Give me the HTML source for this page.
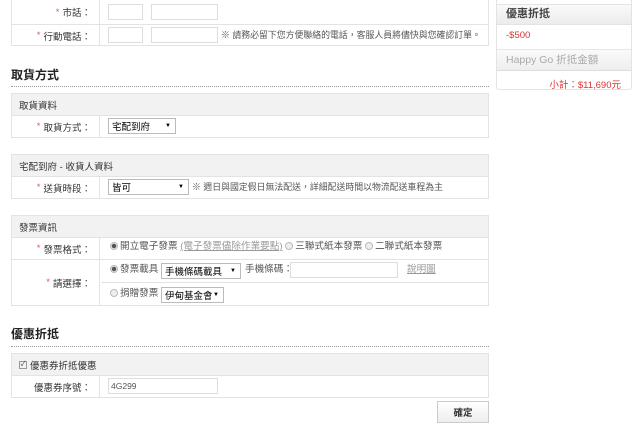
<!DOCTYPE html>
<html><head><meta charset="utf-8"><style>
*{margin:0;padding:0;box-sizing:border-box}
body{width:640px;height:428px;background:#fff;position:relative;overflow:hidden;font-family:"Liberation Sans","Noto Sans CJK TC",sans-serif;font-size:10px;color:#333}
.a{position:absolute}
.box{position:absolute;left:11px;width:478px;border:1px solid #e3e3e3;background:#fff}
.hd{position:absolute;left:0;right:0;background:#f2f2f2;border-bottom:1px solid #e3e3e3;padding-left:7px;display:flex;align-items:center;font-size:9.5px;color:#333}
.row{position:absolute;left:0;right:0;border-top:1px solid #e3e3e3}
.lab{position:absolute;left:0;width:88px;border-right:1px solid #e3e3e3;top:0;bottom:0;display:flex;align-items:center;justify-content:flex-end;padding-right:8px;font-size:9.5px}
.lab b{color:#e55;font-weight:normal;margin-right:3px}
.in{position:absolute;border:1px solid #ddd;background:#fff;height:16px}
.sel{position:absolute;border:1px solid #bbb;background:#fff;height:16px;display:flex;align-items:center;padding-left:3px;font-size:9.5px;color:#000}
.sel:after{content:"▼";position:absolute;right:4px;top:4px;font-size:6px;line-height:6px}
.h2{position:absolute;left:11px;font-size:12px;font-weight:bold;color:#222}
.dot{position:absolute;left:11px;width:478px;border-top:1px dotted #999}
.rad{display:inline-block;width:8px;height:8px;border-radius:50%;border:1px solid #bbb;background:#eee;vertical-align:-1px;margin-right:2px}
.rad.on{background:radial-gradient(#555 0 2px,#eee 2.5px)}
.t{position:absolute;white-space:nowrap;font-size:8.9px;color:#555;line-height:12px}
.r{font-size:9.6px}
</style></head><body>

<div class="box" style="top:-1px;height:47px">
 <div class="row" style="top:0;height:24px;border-top:none"><div class="lab"><b>*</b>市話：</div></div>
 <div class="row" style="top:24px;height:22px"><div class="lab"><b>*</b>行動電話：</div></div>
</div>
<div class="in" style="left:108px;top:4px;width:35px"></div>
<div class="in" style="left:151px;top:4px;width:67px"></div>
<div class="in" style="left:108px;top:27px;width:35px"></div>
<div class="in" style="left:151px;top:27px;width:67px"></div>
<div class="t" style="left:221px;top:29px">※ 請務必留下您方便聯絡的電話，客服人員將儘快與您確認訂單。</div>

<div class="h2" style="top:66px">取貨方式</div>
<div class="dot" style="top:86px"></div>

<div class="box" style="top:93px;height:45px">
 <div class="hd" style="top:0;height:22px">取貨資料</div>
 <div class="row" style="top:21px;height:22px"><div class="lab"><b>*</b>取貨方式：</div></div>
</div>
<div class="sel" style="left:108px;top:118px;width:68px">宅配到府</div>

<div class="box" style="top:154px;height:45px">
 <div class="hd" style="top:0;height:22px">宅配到府 - 收貨人資料</div>
 <div class="row" style="top:21px;height:22px"><div class="lab"><b>*</b>送貨時段：</div></div>
</div>
<div class="sel" style="left:108px;top:179px;width:81px">皆可</div>
<div class="t" style="left:192px;top:181px">※ 週日與國定假日無法配送，詳細配送時間以物流配送車程為主</div>

<div class="box" style="top:215px;height:91px">
 <div class="hd" style="top:0;height:22px">發票資訊</div>
 <div class="row" style="top:21px;height:22px"><div class="lab"><b>*</b>發票格式：</div></div>
 <div class="row" style="top:43px;height:46px"><div class="lab"><b>*</b>請選擇：</div>
  <div style="position:absolute;left:89px;right:0;top:22px;border-top:1px solid #e3e3e3"></div></div>
</div>
<div class="t r" style="left:110px;top:241px"><span class="rad on"></span>開立電子發票 <span style="color:#999;text-decoration:underline">(電子發票儘除作業要點)</span> <span class="rad"></span>三聯式紙本發票 <span class="rad"></span>二聯式紙本發票</div>
<div class="t r" style="left:110px;top:264px"><span class="rad on"></span>發票載具</div>
<div class="sel" style="left:161px;top:263px;width:80px">手機條碼載具</div>
<div class="t r" style="left:245px;top:264px">手機條碼：</div>
<div class="in" style="left:290px;top:262px;width:108px"></div>
<div class="t r" style="left:407px;top:264px;color:#999;text-decoration:underline">說明圖</div>
<div class="t r" style="left:110px;top:288px"><span class="rad"></span>捐贈發票</div>
<div class="sel" style="left:161px;top:287px;width:63px;padding-right:10px">伊甸基金會</div>

<div class="h2" style="top:325px">優惠折抵</div>
<div class="dot" style="top:346px"></div>

<div class="box" style="top:353px;height:45px">
 <div class="hd" style="top:0;height:22px"><span style="display:inline-block;width:8px;height:8px;border:1px solid #999;font-size:7px;line-height:6px;margin-right:3px;text-align:center">✓</span>優惠券折抵優惠</div>
 <div class="row" style="top:21px;height:22px"><div class="lab">優惠券序號：</div></div>
</div>
<div class="in" style="left:108px;top:378px;width:110px;display:flex;align-items:center;padding-left:2px;font-size:8.5px;color:#555">4G299</div>

<div class="a" style="left:437px;top:401px;width:52px;height:22px;border:1px solid #ccc;background:linear-gradient(#fff,#eee);display:flex;align-items:center;justify-content:center;font-weight:bold;font-size:9.5px">確定</div>

<div class="a" style="left:496px;top:-2px;width:136px;height:92px;border:1px solid #e3e3e3;border-radius:3px;background:#fff">
 <div class="a" style="left:0;right:0;top:5px;height:21px;background:linear-gradient(#fafafa,#ececec);border-top:1px solid #e3e3e3;border-bottom:1px solid #e3e3e3;padding-left:9px;line-height:19px;font-weight:bold;font-size:11px;color:#444">優惠折抵</div>
 <div class="a" style="left:9px;top:31px;color:#d33;font-size:9.5px">-$500</div>
 <div class="a" style="left:0;right:0;top:50px;height:22px;background:linear-gradient(#fafafa,#eee);border-top:1px solid #e6e6e6;border-bottom:1px solid #ddd;padding-left:9px;line-height:20px;font-size:10.5px;color:#aaa">Happy Go 折抵金額</div>
 <div class="a" style="right:10px;top:78px;color:#d33;font-size:9.5px">小計：$11,690元</div>
</div>
</body></html>
